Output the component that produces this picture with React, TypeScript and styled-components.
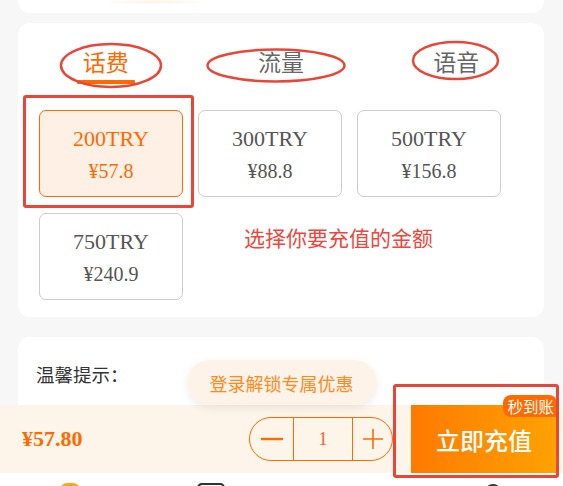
import React from "react";
import styled, { createGlobalStyle } from "styled-components";

const GlobalStyle = createGlobalStyle`
  html, body { margin: 0; padding: 0; background: #f7f7f7; }
  body { font-family: "Liberation Serif", "Noto Sans CJK SC", serif; }
  * { box-sizing: border-box; }
`;

const Page = styled.div`
  width: 563px;
  height: 486px;
  overflow: hidden;
  background: #f7f7f7;
  display: flex;
  flex-direction: column;
`;

const Content = styled.div`
  height: 405px;
  flex: none;
  overflow: hidden;
  padding: 0 19px 0 18px;
  display: flex;
  flex-direction: column;
`;

const TopStub = styled.div`
  height: 13px;
  flex: none;
  background: #fff;
  border-radius: 0 0 12px 12px;
  padding-left: 92px;
`;

const Glow = styled.div`
  width: 90px;
  height: 4px;
  background: radial-gradient(ellipse at center, rgba(255, 180, 120, 0.18), rgba(255, 180, 120, 0));
`;

const Card = styled.div<{ $mt: number }>`
  position: relative;
  flex: none;
  margin-top: ${(p) => p.$mt}px;
  background: #fff;
  border-radius: 12px;
`;

const MainCard = styled(Card)`
  padding: 20px 0 17px;
`;

const Tabs = styled.div`
  display: grid;
  grid-template-columns: repeat(3, 1fr);
`;

const Tab = styled.div<{ $active?: boolean }>`
  display: flex;
  flex-direction: column;
  align-items: center;
  font-family: "Noto Sans CJK SC", sans-serif;
  font-size: 23px;
  line-height: 37px;
  color: ${(p) => (p.$active ? "#ff6a00" : "#666")};
`;

const Underline = styled.div<{ $active?: boolean }>`
  width: 58px;
  height: 4px;
  border-radius: 1px;
  background: ${(p) => (p.$active ? "#ff6a00" : "transparent")};
`;

const OptionGrid = styled.div`
  margin-top: 26px;
  padding-left: 21px;
  display: grid;
  grid-template-columns: repeat(3, 144px);
  column-gap: 15px;
  row-gap: 16px;
`;

const Option = styled.div<{ $active?: boolean }>`
  height: 87px;
  padding-top: 3px;
  display: flex;
  flex-direction: column;
  align-items: center;
  justify-content: center;
  gap: 4px;
  border-radius: 7px;
  border: 1px solid ${(p) => (p.$active ? "#ff6a00" : "#cccccc")};
  background: ${(p) => (p.$active ? "#fff0e6" : "#fff")};
  color: ${(p) => (p.$active ? "#ff6a00" : "#555")};
`;

const Amount = styled.div`
  font-size: 22px;
  line-height: 28px;
`;

const Price = styled.div`
  font-size: 20px;
  line-height: 28px;
`;

const Annotations = styled.svg`
  position: absolute;
  left: 0;
  top: 0;
  pointer-events: none;
`;

const RedBox = styled.div<{ $l: number; $t: number; $w: number; $h: number }>`
  position: absolute;
  left: ${(p) => p.$l}px;
  top: ${(p) => p.$t}px;
  width: ${(p) => p.$w}px;
  height: ${(p) => p.$h}px;
  border: 3px solid #ea4638;
  border-radius: 3px;
  pointer-events: none;
`;

const RedNote = styled.div`
  position: absolute;
  left: 226px;
  top: 202px;
  font-family: "Noto Sans CJK SC", sans-serif;
  font-size: 21px;
  line-height: 24px;
  color: #f0453a;
`;

const TipsCard = styled(Card)`
  height: 120px;
  padding: 24px 18px 0;
  font-family: "Noto Sans CJK SC", sans-serif;
  font-size: 18.5px;
  line-height: 26px;
  color: #333;
`;

const Footer = styled.div`
  position: relative;
  flex: none;
`;

const LoginPill = styled.div`
  position: absolute;
  bottom: 100%;
  left: 50%;
  transform: translateX(-50%);
  width: 189px;
  height: 45px;
  border-radius: 23px;
  background: #fdf3e8;
  box-shadow: 0 3px 10px rgba(0, 0, 0, 0.08);
  display: flex;
  align-items: center;
  justify-content: center;
  font-family: "Noto Sans CJK SC", sans-serif;
  font-size: 18px;
  color: #ff8a1e;
  z-index: 2;
`;

const ActionBar = styled.div`
  position: relative;
  height: 68px;
  background: #fdf4ea;
  display: flex;
  align-items: center;
  padding: 0 6px 0 22px;
`;

const Total = styled.div`
  font-size: 22px;
  font-weight: bold;
  color: #ff6a00;
  margin-right: auto;
`;

const Stepper = styled.div`
  width: 144px;
  height: 44px;
  border: 1px solid #ff6a00;
  border-radius: 22px;
  display: grid;
  grid-template-columns: 43px 59px 1fr;
  margin-right: 18px;
`;

const StepCell = styled.div<{ $divider?: boolean }>`
  display: flex;
  align-items: center;
  justify-content: center;
  border-left: ${(p) => (p.$divider ? "1px solid #ff6a00" : "none")};
  color: #ff5a2e;
  font-size: 18px;
`;

const BuyButton = styled.div`
  position: relative;
  align-self: stretch;
  width: 146px;
  background: linear-gradient(90deg, #ff7a00, #ffa200);
  display: flex;
  align-items: center;
  justify-content: center;
  font-family: "Noto Sans CJK SC", sans-serif;
  font-size: 24px;
  font-weight: 500;
  color: #fff;
`;

const Badge = styled.div`
  position: absolute;
  top: -10px;
  right: 0;
  height: 22px;
  padding: 0 3px 0 4px;
  border-radius: 8px 8px 0 8px;
  background: #ff6a00;
  font-size: 15.5px;
  line-height: 22px;
  font-weight: 400;
  color: #fff;
`;

const TabBar = styled.div`
  height: 60px;
  background: #fff;
  display: grid;
  grid-template-columns: repeat(4, 1fr);
  padding-top: 10px;
`;

const TabItem = styled.div`
  display: flex;
  justify-content: center;
`;

const options = [
  { amount: "200TRY", price: "¥57.8", active: true },
  { amount: "300TRY", price: "¥88.8" },
  { amount: "500TRY", price: "¥156.8" },
  { amount: "750TRY", price: "¥240.9" },
];

const tabs = [
  { label: "话费", active: true },
  { label: "流量" },
  { label: "语音" },
];

export default function App() {
  return (
    <>
      <GlobalStyle />
      <Page>
        <Content>
          <TopStub>
            <Glow />
          </TopStub>
          <MainCard $mt={10}>
            <Tabs>
              {tabs.map((t) => (
                <Tab key={t.label} $active={t.active}>
                  {t.label}
                  <Underline $active={t.active} />
                </Tab>
              ))}
            </Tabs>
            <OptionGrid>
              {options.map((o) => (
                <Option key={o.amount} $active={o.active}>
                  <Amount>{o.amount}</Amount>
                  <Price>{o.price}</Price>
                </Option>
              ))}
            </OptionGrid>
            <Annotations width="526" height="120" viewBox="0 0 526 120">
              <g fill="none" stroke="#ea4638" strokeWidth="2.5">
                <ellipse cx="93" cy="42.5" rx="50" ry="21.5" />
                <ellipse cx="258" cy="42.5" rx="68.5" ry="16" />
                <ellipse cx="437.5" cy="37.5" rx="42.5" ry="18.5" />
              </g>
            </Annotations>
            <RedBox $l={5} $t={72} $w={171} $h={113} />
            <RedNote>选择你要充值的金额</RedNote>
          </MainCard>
          <TipsCard $mt={20}>温馨提示：</TipsCard>
        </Content>
        <Footer>
          <LoginPill>登录解锁专属优惠</LoginPill>
          <ActionBar>
            <Total>¥57.80</Total>
            <Stepper>
              <StepCell>
                <svg width="22" height="4" viewBox="0 0 22 4">
                  <rect x="0" y="0.8" width="22" height="2.4" fill="#ff6a00" />
                </svg>
              </StepCell>
              <StepCell $divider>1</StepCell>
              <StepCell $divider>
                <svg width="20" height="20" viewBox="0 0 20 20">
                  <path d="M0 10H20M10 0V20" stroke="#ff6a00" strokeWidth="1.6" />
                </svg>
              </StepCell>
            </Stepper>
            <BuyButton>
              立即充值
              <Badge>秒到账</Badge>
            </BuyButton>
            <RedBox $l={393} $t={-21} $w={166} $h={94} />
          </ActionBar>
          <TabBar>
            <TabItem>
              <svg width="22" height="24" viewBox="0 0 22 24">
                <rect x="1" y="0" width="20" height="22" rx="7" fill="#ffa31a" />
              </svg>
            </TabItem>
            <TabItem>
              <svg width="28" height="24" viewBox="0 0 28 24">
                <rect x="1" y="1" width="26" height="22" rx="4" fill="none" stroke="#333" strokeWidth="2.2" />
              </svg>
            </TabItem>
            <TabItem />
            <TabItem>
              <svg width="18" height="24" viewBox="0 0 18 24">
                <circle cx="9" cy="9" r="7" fill="none" stroke="#333" strokeWidth="2.2" />
              </svg>
            </TabItem>
          </TabBar>
        </Footer>
      </Page>
    </>
  );
}
